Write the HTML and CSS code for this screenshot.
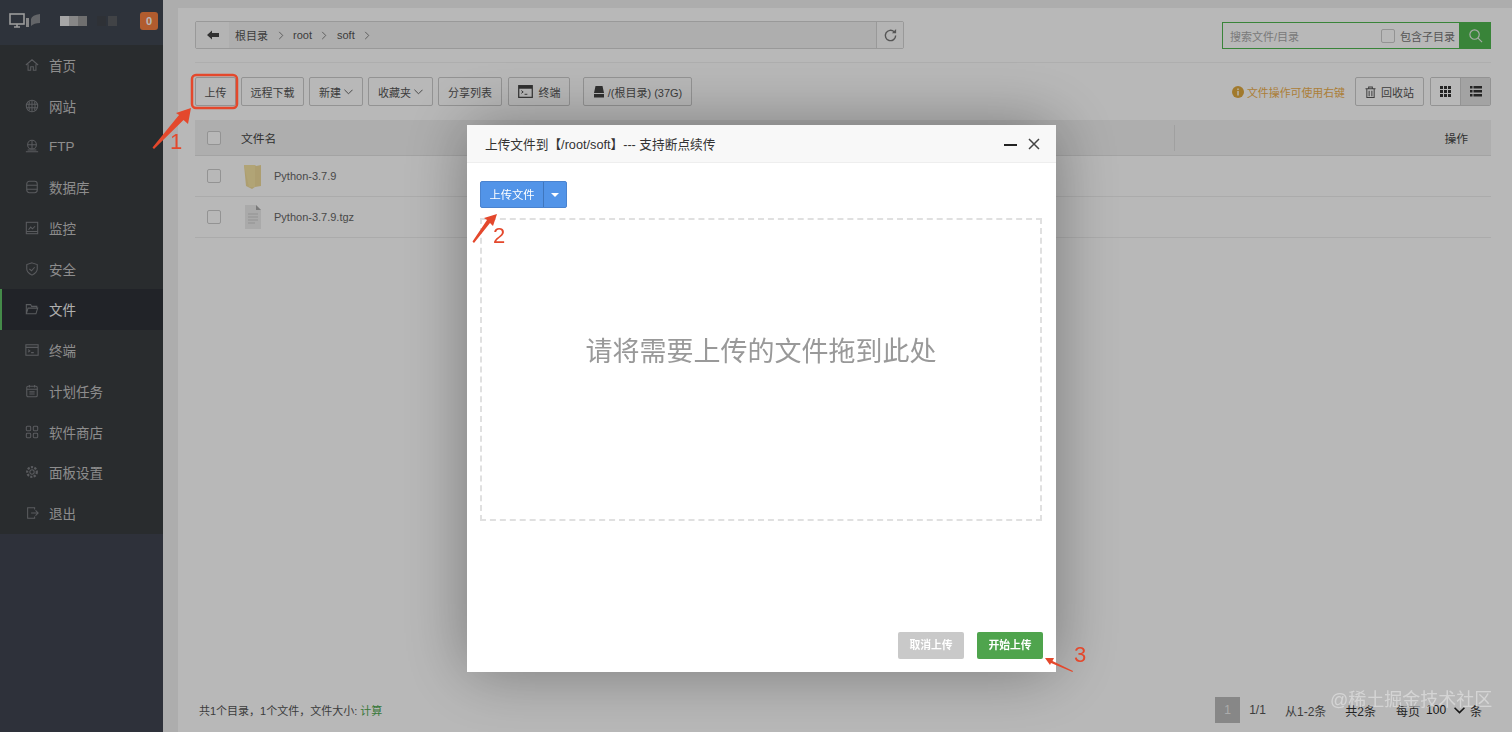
FILE: index.html
```html
<!DOCTYPE html>
<html lang="zh">
<head>
<meta charset="utf-8">
<title>文件</title>
<link rel="stylesheet" href="styles.css">
</head>
<body>
<div class="app">
  <aside class="side">
    <div class="brand">
      <svg class="brand-ico" viewBox="0 0 36 18" width="36" height="18"><rect x="1" y="2" width="14" height="10" fill="none" stroke="#d8d8d8" stroke-width="1.6"/><path d="M5 15h6M8 12v3" stroke="#d8d8d8" stroke-width="1.6"/><rect x="17" y="6" width="3" height="9" fill="#bbb"/><path d="M22 14V7q1-4 9-5v9q-6 0-9 3z" fill="#8a8d90"/></svg>
      <span class="blur-name"><i class="b1"></i><i class="b2"></i><i class="b3"></i><i class="b4"></i><i class="b5"></i></span>
      <span class="badge">0</span>
    </div>
    <nav class="menu">
      <a class="item"><svg viewBox="0 0 16 16"><path d="M1 8l7-6 7 6M3.500 7v7h3v-4h3v4h3V7"/></svg>首页</a>
      <a class="item"><svg viewBox="0 0 16 16"><circle cx="8" cy="8" r="6.500"/><path d="M1.500 6h13M1.500 10h13M8 1.500v13M5 3q-1 5 0 10M11 3q1 5 0 10"/></svg>网站</a>
      <a class="item"><svg viewBox="0 0 16 16"><circle cx="8" cy="6.500" r="5"/><path d="M3 6.500h10M8 1.500v10M1 14.500h14M3 12.500h10"/></svg>FTP</a>
      <a class="item"><svg viewBox="0 0 16 16"><rect x="2" y="1.500" width="12" height="13" rx="3"/><path d="M2 6h12M2 10.500h12"/></svg>数据库</a>
      <a class="item"><svg viewBox="0 0 16 16"><rect x="1.500" y="1.500" width="13" height="13"/><path d="M4 10l2.500-3 2 2 3-3M1.500 12h13"/></svg>监控</a>
      <a class="item"><svg viewBox="0 0 16 16"><path d="M8 1l6 2v5q0 4-6 7-6-3-6-7V3zM5 8l2.500 2L11 6"/></svg>安全</a>
      <a class="item active"><svg viewBox="0 0 16 16"><path d="M1.500 13.500V3h5l1 2h6v2M1.500 13.500h11l2-6.500h-11z"/></svg>文件</a>
      <a class="item"><svg viewBox="0 0 16 16"><rect x="1" y="2" width="14" height="12"/><path d="M1 5h14M3.500 7.500l2 1.500-2 1.500M7 11h3"/></svg>终端</a>
      <a class="item"><svg viewBox="0 0 16 16"><rect x="2" y="2.500" width="12" height="12" rx="1.500"/><path d="M2 6h12M5 1v3M11 1v3M5 9h6M5 11.500h6"/></svg>计划任务</a>
      <a class="item"><svg viewBox="0 0 16 16"><rect x="1.500" y="1.500" width="5" height="5" rx="1"/><rect x="9.500" y="1.500" width="5" height="5" rx="1"/><rect x="1.500" y="9.500" width="5" height="5" rx="1"/><rect x="9.500" y="9.500" width="5" height="5" rx="1"/></svg>软件商店</a>
      <a class="item"><svg viewBox="0 0 16 16"><circle cx="8" cy="8" r="2.500"/><circle cx="8" cy="8" r="5.500" stroke-dasharray="2.500 1.500" stroke-width="2.500"/></svg>面板设置</a>
      <a class="item"><svg viewBox="0 0 16 16"><path d="M11 4V2H3v12h8v-2M7 8h8M12 5l3 3-3 3"/></svg>退出</a>
    </nav>
  </aside>

  <main class="main">
    <div class="panel">
      <div class="pathbar">
        <div class="path">
          <span class="back"><svg viewBox="0 0 12 10" width="12" height="10"><path d="M0 5l5-4.500V3h7v4H5v2.500z" fill="#444"/></svg></span>
          <span class="crumbs">
            <span>根目录</span><svg class="sep" viewBox="0 0 6 10"><path d="M1 1l4 4-4 4"/></svg>
            <span>root</span><svg class="sep" viewBox="0 0 6 10"><path d="M1 1l4 4-4 4"/></svg>
            <span>soft</span><svg class="sep" viewBox="0 0 6 10"><path d="M1 1l4 4-4 4"/></svg>
          </span>
          <span class="refresh"><svg viewBox="0 0 16 16" width="15" height="15"><path d="M13.500 8a5.500 5.500 0 1 1-1.600-3.900" fill="none" stroke="#777" stroke-width="1.500"/><path d="M14 1v4.500H9.500z" fill="#777"/></svg></span>
        </div>
        <div class="search">
          <span class="search-ph">搜索文件/目录</span>
          <span class="check-sm"></span>
          <span class="search-sub">包含子目录</span>
          <span class="search-btn"><svg viewBox="0 0 16 16" width="15" height="15"><circle cx="7" cy="7" r="5" fill="none" stroke="#eee" stroke-width="1.200"/><path d="M10.700 10.700L15 15" stroke="#eee" stroke-width="1.200"/></svg></span>
        </div>
      </div>

      <div class="toolbar">
        <span class="btn btn-upload">上传</span>
        <span class="btn">远程下载</span>
        <span class="btn">新建<svg class="caret" viewBox="0 0 10 6"><path d="M.5.500L5 5 9.500.500"/></svg></span>
        <span class="btn">收藏夹<svg class="caret" viewBox="0 0 10 6"><path d="M.5.500L5 5 9.500.500"/></svg></span>
        <span class="btn">分享列表</span>
        <span class="btn btn-term"><svg viewBox="0 0 16 14" width="15" height="13"><rect x=".7" y=".7" width="14.600" height="12.600" fill="none" stroke="#444" stroke-width="1.300"/><rect x="1" y="1" width="14" height="3" fill="#444"/><path d="M3.500 6l2 1.500-2 1.500M7 10h3" fill="none" stroke="#444"/></svg>终端</span>
        <span class="btn btn-disk"><svg viewBox="0 0 12 12" width="12" height="12"><path d="M2.500 0h7L11 7H1z" fill="#444"/><rect x="1" y="8" width="10" height="3.500" fill="#444"/></svg>/(根目录) (37G)</span>
        <span class="hint"><svg viewBox="0 0 12 12" width="12" height="12"><circle cx="6" cy="6" r="6" fill="#e0a93f"/><rect x="5" y="5" width="2" height="4.500" fill="#f6e7c4"/><rect x="5" y="2.500" width="2" height="1.600" fill="#f6e7c4"/></svg>文件操作可使用右键</span>
        <span class="btn btn-recycle"><svg viewBox="0 0 12 13" width="11" height="12"><path d="M.5 3h11M4 3V1h4v2M2 3v9.500h8V3M4.500 5v6M7.500 5v6" fill="none" stroke="#555" stroke-width="1.100"/></svg>回收站</span>
        <span class="views">
          <span class="view"><svg viewBox="0 0 11 11" width="11" height="11"><path d="M0 0h3v3H0zM4 0h3v3H4zM8 0h3v3H8zM0 4h3v3H0zM4 4h3v3H4zM8 4h3v3H8zM0 8h3v3H0zM4 8h3v3H4zM8 8h3v3H8z" fill="#333"/></svg></span>
          <span class="view on"><svg viewBox="0 0 12 11" width="12" height="11"><path d="M0 0h2.500v2.500H0zM3.500 0H12v2.500H3.500zM0 4h2.500v2.500H0zM3.500 4H12v2.500H3.500zM0 8h2.500v2.500H0zM3.500 8H12v2.500H3.500z" fill="#333"/></svg></span>
        </span>
      </div>

      <div class="table">
        <div class="row head">
          <span class="check"></span>
          <span class="col-name">文件名</span>
          <span class="col-op">操作</span>
        </div>
        <div class="row">
          <span class="check"></span>
          <svg class="ficon" viewBox="0 0 20 26" width="20" height="26"><path d="M1 2h11l1 1 5-1v21l-6 1-3 2-6-3z" fill="#f0dc9c"/><path d="M1 2h11v22l-6 0z" fill="#f5e3a4"/></svg>
          <span class="fname">Python-3.7.9</span>
        </div>
        <div class="row">
          <span class="check"></span>
          <svg class="ficon" viewBox="0 0 20 26" width="20" height="26"><path d="M2 1h11l5 5v19H2z" fill="#ececec"/><path d="M13 1v5h5z" fill="#aaa"/><path d="M5 10h10M5 13h10M5 16h10M5 19h7" stroke="#ccc"/></svg>
          <span class="fname">Python-3.7.9.tgz</span>
        </div>
      </div>

      <div class="foot">
        <span class="summary">共1个目录，1个文件，文件大小: <b>计算</b></span>
        <div class="pager">
          <span class="pg cur">1</span>
          <span class="pg">1/1</span>
          <span class="pg t1">从1-2条</span>
          <span class="pg t2">共2条</span>
          <span class="pg t3">每页</span>
          <span class="pg t4">100<svg class="caret dark" viewBox="0 0 10 6"><path d="M.5.500L5 5 9.500.500"/></svg></span>
          <span class="pg t5">条</span>
        </div>
      </div>
    </div>
  </main>
</div>

<div class="shade">
  <section class="modal">
    <header class="modal-head">
      <span>上传文件到【/root/soft】--- 支持断点续传</span>
      <span class="win">
        <svg viewBox="0 0 14 12" width="14" height="12"><path d="M0 7h13" stroke="#222" stroke-width="2"/></svg>
        <svg viewBox="0 0 12 12" width="12" height="12"><path d="M1 1l10 10M11 1L1 11" stroke="#444" stroke-width="1.500"/></svg>
      </span>
    </header>
    <div class="modal-body">
      <div class="split">
        <span class="split-main">上传文件</span>
        <span class="split-arrow"><i></i></span>
      </div>
      <div class="drop">请将需要上传的文件拖到此处</div>
      <div class="actions">
        <span class="act cancel">取消上传</span>
        <span class="act start">开始上传</span>
      </div>
    </div>
  </section>
</div>

<svg class="marks" viewBox="0 0 1512 732" width="1512" height="732">
  <rect x="192" y="75" width="45" height="33" rx="4" fill="none" stroke="#e4482c" stroke-width="2.500"/>
  <path d="M191 108L188 124 183.500 120 154 149 152.500 147.500 179 115 176 113z" fill="#e4482c"/>
  <path d="M497 214L493 226 490 223 474 243 472.500 241.500 487 220 484 218z" fill="#e4482c"/>
  <path d="M1045 658L1054 658 1052.500 661 1073 671 1072.500 672 1051 663 1050 665z" fill="#e4482c"/>
</svg>
<span class="num n1">1</span>
<span class="num n2">2</span>
<span class="num n3">3</span>
<span class="mark-text">@稀土掘金技术社区</span>
</body>
</html>
```

FILE: styles.css
```css
* { box-sizing: border-box; }
html, body { margin: 0; height: 100%; overflow: hidden; }
body {
  font-family: "Liberation Sans", "Noto Sans CJK SC", sans-serif;
  font-size: 12px;
  color: #555;
  background: #f0f0f0;
}
.app { display: flex; height: 732px; }

/* Sidebar */
.side { width: 163px; flex: none; background: #404451; }
.brand {
  height: 44.500px;
  display: flex;
  align-items: center;
  padding: 0 5px 0 9px;
  background: #414752;
}
.brand-ico { flex: none; margin-top: -2px; }
.blur-name { display: flex; margin: -2px 0 0 15px; flex: 1; filter: blur(.6px); }
.blur-name i { display: block; width: 9px; height: 10px; }
.b1 { background: #e6e6e6; }
.b2 { background: #bbb; }
.b3 { background: #9a9a9a; }
.b4 { background: #41454b; margin-left: 10px; }
.b5 { background: #5a5d62; margin-left: 2px; }
.badge {
  width: 18px;
  height: 18px;
  margin-top: -2px;
  border-radius: 3px;
  background: #f58040;
  color: #fff;
  font-size: 11px;
  font-weight: bold;
  line-height: 18px;
  text-align: center;
}
.menu { display: flex; flex-direction: column; background: #3a3d40; }
.item {
  height: 40.750px;
  display: flex;
  align-items: center;
  gap: 10px;
  padding-left: 25px;
  font-size: 13.500px;
  color: #c4c4c4;
}
.item svg {
  width: 14px;
  height: 14px;
  flex: none;
  fill: none;
  stroke: #7c7f83;
  stroke-width: 1.200;
}
.item.active {
  background: #2f3138;
  border-left: 2px solid #5fc066;
  padding-left: 23px;
  color: #f4f4f4;
}

/* Main */
.main { flex: 1; min-width: 0; padding: 8px 0 0 15px; }
.panel {
  height: 724px;
  background: #fff;
  padding: 13px 21px 9px 17px;
  display: flex;
  flex-direction: column;
}
.pathbar {
  display: flex;
  justify-content: space-between;
  height: 42px;
  border-bottom: 1px solid #f2f2f2;
}
.path {
  width: 709px;
  height: 28px;
  display: flex;
  align-items: center;
  background: #f1f1f1;
  border: 1px solid #d4d4d4;
  border-radius: 2px;
}
.back {
  width: 33px;
  height: 100%;
  background: #fafafa;
  display: flex;
  align-items: center;
  justify-content: center;
  flex: none;
}
.crumbs { flex: 1; display: flex; align-items: center; padding-left: 6px; font-size: 11px; color: #555; }
.sep { width: 6px; height: 9px; margin: 0 9.500px; fill: none; stroke: #777; }
.refresh {
  width: 27px;
  height: 100%;
  background: #fafafa;
  border-left: 1px solid #d4d4d4;
  display: flex;
  align-items: center;
  justify-content: center;
  flex: none;
}
.search {
  width: 269px;
  height: 27px;
  margin-top: 1px;
  display: flex;
  align-items: center;
  border: 1px solid #50b850;
  background: #fff;
  padding-left: 7px;
}
.search-ph { flex: 1; font-size: 11px; color: #aaa; }
.check-sm { width: 14px; height: 14px; border: 1px solid #ccc; border-radius: 2px; background: #fff; }
.search-sub { margin: 0 4px 0 5px; font-size: 11px; color: #777; }
.search-btn {
  width: 32px;
  height: 27px;
  margin-right: -1px;
  background: #50b850;
  display: flex;
  align-items: center;
  justify-content: center;
}

.toolbar { display: flex; align-items: center; height: 29px; margin-top: 14px; }
.btn {
  height: 29px;
  display: inline-flex;
  align-items: center;
  justify-content: center;
  padding: 0 9px;
  margin-right: 5px;
  background: #fff;
  border: 1px solid #ccc;
  border-radius: 2px;
  font-size: 11px;
  color: #555;
  white-space: nowrap;
}
.btn-upload { width: 41px; padding: 0; }
.btn-upload + .btn { width: 63px; padding: 0; }
.caret { width: 9px; height: 6px; margin-left: 3px; fill: none; stroke: #555; }
.caret.dark { margin-left: 8px; width: 11px; height: 7px; stroke: #222; stroke-width: 1.500; }
.btn-term { width: 62px; gap: 6px; margin: 0 13px 0 1px; padding: 0; }
.btn-disk { width: 109px; gap: 3px; padding: 0; }
.hint {
  margin-left: auto;
  display: inline-flex;
  align-items: center;
  gap: 3px;
  font-size: 10.900px;
  color: #eeb04f;
}
.btn-recycle { width: 69px; gap: 5px; margin: 0 6px 0 10px; padding: 0; }
.views { display: flex; height: 29px; width: 61px; border: 1px solid #ccc; border-radius: 2px; overflow: hidden; }
.view { flex: 1; display: flex; align-items: center; justify-content: center; background: #fff; }
.view.on { background: #e2e2e2; border-left: 1px solid #ccc; }

.table { margin-top: 14px; }
.row {
  height: 41px;
  display: flex;
  align-items: center;
  padding-left: 12px;
  border-bottom: 1px solid #eee;
}
.row.head {
  height: 36px;
  background: #f1f1f1;
  border-bottom: 1px solid #e2e2e2;
}
.check { width: 14px; height: 14px; flex: none; border: 1px solid #ccc; border-radius: 2px; background: #fff; }
.col-name { margin-left: 20px; font-size: 11.800px; color: #444; flex: 1; }
.col-op {
  width: 317px;
  height: 26px;
  border-left: 1px solid #dedede;
  padding-right: 23px;
  display: flex;
  align-items: center;
  justify-content: flex-end;
  font-size: 11.800px;
  color: #444;
}
.ficon { margin-left: 22px; flex: none; }
.fname { margin-left: 11px; font-size: 11px; color: #666; }

.foot { margin-top: auto; display: flex; justify-content: space-between; align-items: center; height: 26px; }
.summary { margin-left: 4px; font-size: 11px; color: #555; }
.summary b { font-weight: normal; color: #50a850; }
.pager { display: flex; align-items: center; height: 26px; width: 276px; font-size: 12px; color: #444; }
.pg { white-space: nowrap; }
.pg.cur { width: 25px; height: 26px; line-height: 26px; text-align: center; background: #bbb; color: #eee; }
.pg:nth-child(2) { width: 35px; text-align: center; color: #555; }
.t1 { margin-left: 10px; color: #555; }
.t2 { margin-left: 19px; color: #333; }
.t3 { margin-left: 20px; color: #333; }
.t4 { margin-left: 6px; color: #222; display: inline-flex; align-items: center; }
.t5 { margin-left: 5px; color: #333; }

/* Dialog */
.shade { position: fixed; inset: 0; background: rgba(0, 0, 0, .28); }
.modal {
  position: absolute;
  left: 467px;
  top: 125px;
  width: 589px;
  height: 547px;
  display: flex;
  flex-direction: column;
  background: #fff;
  box-shadow: 0 0 60px rgba(0, 0, 0, .35);
}
.modal-head {
  height: 38px;
  flex: none;
  display: flex;
  align-items: center;
  justify-content: space-between;
  padding: 0 16px 0 18px;
  background: #f8f8f8;
  border-bottom: 1px solid #eee;
  font-size: 12.700px;
  color: #333;
}
.win { display: flex; align-items: center; gap: 10px; }
.modal-body { flex: 1; display: flex; flex-direction: column; padding: 18px 14px 13px 13px; }
.split {
  width: 87px;
  height: 27px;
  display: flex;
  flex: none;
  background: #5294e8;
  border: 1px solid #4a83cf;
  border-radius: 2px;
  color: #fff;
  font-size: 11.300px;
  line-height: 26px;
}
.split-main { width: 63px; text-align: center; border-right: 1px solid #3f76bd; }
.split-arrow { flex: 1; display: flex; align-items: center; justify-content: center; }
.split-arrow i { border: 4px solid transparent; border-top-color: #fff; border-bottom: 0; }
.drop {
  height: 303px;
  margin-top: 10px;
  padding-bottom: 40px;
  flex: none;
  border: 2px dashed #e0e0e0;
  display: flex;
  align-items: center;
  justify-content: center;
  font-size: 27px;
  color: #999;
}
.actions { margin: auto -1px 0 0; display: flex; justify-content: flex-end; gap: 13px; }
.act {
  width: 66px;
  height: 27px;
  border-radius: 2px;
  color: #fff;
  font-size: 10.800px;
  font-weight: bold;
  line-height: 27px;
  text-align: center;
}
.cancel { background: #c9c9c9; }
.start { background: #4fa44d; }

/* Hand-drawn screenshot annotations */
.marks { position: fixed; left: 0; top: 0; pointer-events: none; }
.num {
  position: fixed;
  font-size: 22px;
  line-height: 24px;
  font-weight: normal;
  color: #e4482c;
}
.n1 { left: 170px; top: 130px; }
.n2 { left: 493px; top: 224px; }
.n3 { left: 1074px; top: 643px; }
.mark-text {
  position: fixed;
  left: 1330px;
  top: 688px;
  font-size: 18px;
  line-height: 24px;
  color: rgba(255, 255, 255, .4);
  white-space: nowrap;
}
```
